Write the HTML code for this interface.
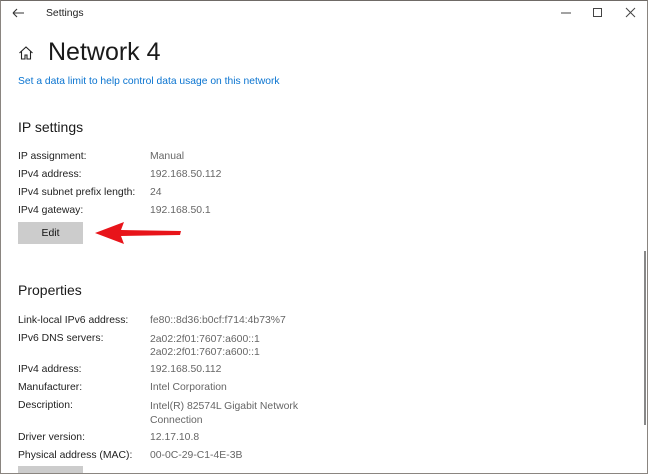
<!DOCTYPE html><html><head><style>
body{margin:0;width:648px;height:474px;overflow:hidden;background:#fff;font-family:"Liberation Sans",sans-serif;position:relative}
.win{position:absolute;inset:0;border:1px solid #8a8580;border-top-color:#6f6a66;box-sizing:border-box}
.t{position:absolute;white-space:nowrap}
.l{left:18px;font-size:10.4px;color:#222}
.v{left:150px;font-size:10.4px;color:#666}
</style></head><body>
<div class="win"></div>
<svg class="t" style="left:11px;top:7px" width="14" height="12"><path d="M2 6H13M2 6L6 2M2 6L6 10" stroke="#333" stroke-width="1.1" fill="none"/></svg>
<div class="t" style="left:46px;top:8px;font-size:10.4px;color:#222">Settings</div>
<svg class="t" style="left:560px;top:6px" width="80" height="14"><path d="M1 7H11" stroke="#444"/><rect x="33.5" y="2.5" width="8" height="8" stroke="#444" fill="none"/><path d="M66 2L75 11M75 2L66 11" stroke="#444"/></svg>
<svg class="t" style="left:18px;top:45px" width="16" height="16"><path d="M1.5 8L8 2L14.5 8M3.5 6.5V14H7V10H9V14H12.5V6.5" stroke="#222" stroke-width="1.1" fill="none"/></svg>
<div class="t" style="left:48px;top:38px;font-size:25px;color:#1a1a1a">Network 4</div>
<div class="t" style="left:18px;top:76px;font-size:10.3px;color:#0a74d0">Set a data limit to help control data usage on this network</div>
<div class="t" style="left:18px;top:119px;font-size:14px;color:#1a1a1a">IP settings</div>
<div class="t l" style="top:151px">IP assignment:</div><div class="t v" style="top:151px">Manual</div>
<div class="t l" style="top:169px">IPv4 address:</div><div class="t v" style="top:169px">192.168.50.112</div>
<div class="t l" style="top:187px">IPv4 subnet prefix length:</div><div class="t v" style="top:187px">24</div>
<div class="t l" style="top:205px">IPv4 gateway:</div><div class="t v" style="top:205px">192.168.50.1</div>
<div class="t" style="left:18px;top:222px;width:65px;height:22px;background:#ccc;font-size:10.4px;color:#111;text-align:center;line-height:23px">Edit</div>
<svg class="t" style="left:92px;top:220px" width="92" height="26"><path d="M3 13L32 2L29 10L89 11L88 15L29 16L32 24Z" fill="#e8141a"/></svg>
<div class="t" style="left:18px;top:282px;font-size:14px;color:#1a1a1a">Properties</div>
<div class="t l" style="top:315px">Link-local IPv6 address:</div><div class="t v" style="top:315px">fe80::8d36:b0cf:f714:4b73%7</div>
<div class="t l" style="top:333px">IPv6 DNS servers:</div><div class="t v" style="top:333px;line-height:13px">2a02:2f01:7607:a600::1<br>2a02:2f01:7607:a600::1</div>
<div class="t l" style="top:364px">IPv4 address:</div><div class="t v" style="top:364px">192.168.50.112</div>
<div class="t l" style="top:382px">Manufacturer:</div><div class="t v" style="top:382px">Intel Corporation</div>
<div class="t l" style="top:400px">Description:</div><div class="t v" style="top:400px;line-height:14px">Intel(R) 82574L Gigabit Network<br>Connection</div>
<div class="t l" style="top:432px">Driver version:</div><div class="t v" style="top:432px">12.17.10.8</div>
<div class="t l" style="top:450px">Physical address (MAC):</div><div class="t v" style="top:450px">00-0C-29-C1-4E-3B</div>
<div class="t" style="left:18px;top:466px;width:65px;height:7px;background:#ccc"></div>
<div class="t" style="left:644px;top:251px;width:2px;height:174px;background:#888"></div>
</body></html>
